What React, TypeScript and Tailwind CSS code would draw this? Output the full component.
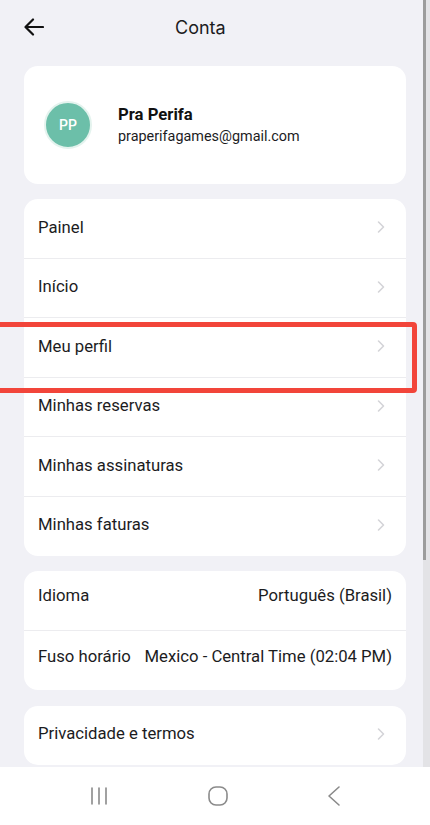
const menuItems = [
  "Painel",
  "Início",
  "Meu perfil",
  "Minhas reservas",
  "Minhas assinaturas",
  "Minhas faturas",
];

const Chevron = () => (
  <svg width="10" height="14" viewBox="0 0 10 14" fill="none">
    <path
      d="M2.5 2 L7.5 7 L2.5 12"
      stroke="#d4d4d8"
      strokeWidth="1.6"
      strokeLinecap="round"
      strokeLinejoin="round"
    />
  </svg>
);

const Row = ({ label, last }: { label: string; last?: boolean }) => (
  <div
    className={
      last
        ? "flex h-[59px] items-center justify-between pb-[2px] pl-[14px] pr-[20px]"
        : "flex h-[59.5px] items-center justify-between border-b border-[#ececef] pb-[2px] pl-[14px] pr-[20px]"
    }
  >
    <span className="text-[16.7px] text-[#1c1c1e]">{label}</span>
    <Chevron />
  </div>
);

export default function App() {
  return (
    <div className="relative flex h-[825px] w-[430px] flex-col overflow-hidden bg-[#f1f1f6] font-['Roboto',sans-serif]">
      <div className="flex-1 overflow-hidden px-[24px]">
        {/* header */}
        <div className="flex h-[56px] items-center pb-[2px]">
          <svg width="20" height="18" viewBox="0 0 20 18" fill="none">
            <path
              d="M19 9 H2 M9 1.5 L1.5 9 L9 16.5"
              stroke="#111"
              strokeWidth="2.2"
              strokeLinecap="round"
              strokeLinejoin="round"
            />
          </svg>
          <h1 className="ml-[131px] font-['Inter',sans-serif] text-[18px] text-[#1c1c1e]">
            Conta
          </h1>
        </div>

        {/* profile */}
        <div className="mt-[10px] flex h-[118px] items-center rounded-[14px] bg-white pl-[20px]">
          <div className="flex h-[48px] w-[48px] items-center justify-center rounded-full border-2 border-[#e4f3ee] bg-[#6cbfa9]">
            <span className="text-[14px] font-medium text-white">PP</span>
          </div>
          <div className="ml-[26px] flex flex-col pt-[2px]">
            <span className="text-[16.7px] font-bold leading-[22px] text-[#111]">
              Pra Perifa
            </span>
            <span className="text-[14.4px] leading-[22px] text-[#1c1c1e]">
              praperifagames@gmail.com
            </span>
          </div>
        </div>

        {/* menu */}
        <div className="mt-[15px] overflow-hidden rounded-[14px] bg-white">
          {menuItems.map((item, i) => (
            <Row key={item} label={item} last={i === menuItems.length - 1} />
          ))}
        </div>

        {/* settings */}
        <div className="mt-[15px] overflow-hidden rounded-[14px] bg-white">
          <div className="flex h-[60px] items-center justify-between border-b border-[#ececef] pb-[8px] pl-[14px] pr-[14px] text-[16.7px] text-[#1c1c1e]">
            <span>Idioma</span>
            <span>Português (Brasil)</span>
          </div>
          <div className="flex h-[59px] items-center justify-between pb-[6px] pl-[14px] pr-[14px] text-[16.7px] text-[#1c1c1e]">
            <span>Fuso horário</span>
            <span>Mexico - Central Time (02:04 PM)</span>
          </div>
        </div>

        {/* privacy */}
        <div className="mt-[16px] overflow-hidden rounded-[14px] bg-white">
          <Row label="Privacidade e termos" last />
        </div>
      </div>

      {/* android nav bar */}
      <div className="flex h-[58px] shrink-0 items-center justify-around bg-white px-[40px]">
        <svg width="20" height="20" viewBox="0 0 20 20" fill="none">
          <path
            d="M3 2 V18 M10 2 V18 M17 2 V18"
            stroke="#8a8a8a"
            strokeWidth="1.6"
            strokeLinecap="round"
          />
        </svg>
        <svg width="22" height="22" viewBox="0 0 22 22" fill="none">
          <rect
            x="2"
            y="2"
            width="18"
            height="18"
            rx="7"
            stroke="#8a8a8a"
            strokeWidth="1.6"
          />
        </svg>
        <svg width="14" height="22" viewBox="0 0 14 22" fill="none">
          <path
            d="M12 2 L2 11 L12 20"
            stroke="#8a8a8a"
            strokeWidth="1.6"
            strokeLinecap="round"
            strokeLinejoin="round"
          />
        </svg>
      </div>

      {/* scrollbar */}
      <div className="absolute right-0 top-0 h-[767px] w-[7px] bg-[#e3e3e6]">
        <div className="h-[560px] w-[3px] bg-[#9c9c9c]" />
      </div>

      {/* highlight */}
      <div className="absolute left-[-10px] top-[322px] h-[71px] w-[427px] rounded-[4px] border-[5px] border-[#f2453a]" />
    </div>
  );
}
